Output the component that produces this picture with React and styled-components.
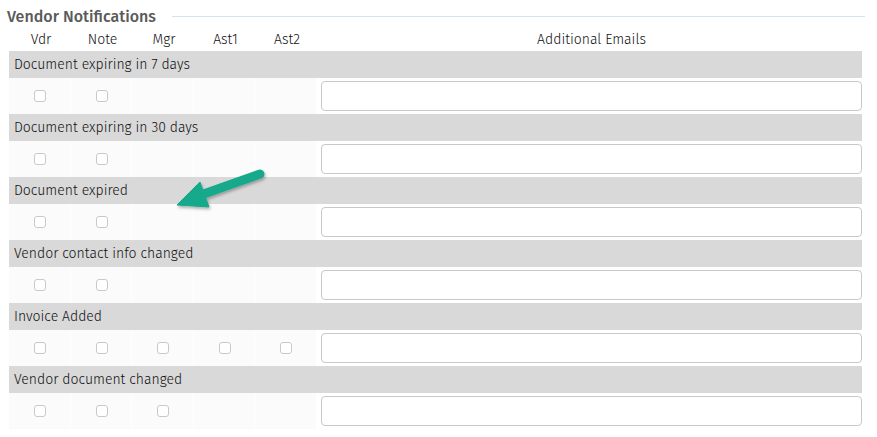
import React from "react";
import styled, { createGlobalStyle } from "styled-components";

const GlobalStyle = createGlobalStyle`
  body {
    margin: 0;
    background: #fff;
    font-family: "Fira Sans", "Open Sans", "Noto Sans", sans-serif;
  }
`;

const columns = ["Vdr", "Note", "Mgr", "Ast1", "Ast2"];

const rows = [
  { label: "Document expiring in 7 days", boxes: 2 },
  { label: "Document expiring in 30 days", boxes: 2 },
  { label: "Document expired", boxes: 2 },
  { label: "Vendor contact info changed", boxes: 2 },
  { label: "Invoice Added", boxes: 5 },
  { label: "Vendor document changed", boxes: 3 },
];

const App = () => {
  return (
    <>
      <GlobalStyle />
      <Page>
        <Legend>
          <LegendText>Vendor Notifications</LegendText>
          <LegendLine />
        </Legend>
        <Table>
          <HeadRow>
            {columns.map((c) => (
              <HeadCell key={c}>{c}</HeadCell>
            ))}
            <EmailHead>Additional Emails</EmailHead>
          </HeadRow>
          {rows.map((r) => (
            <React.Fragment key={r.label}>
              <GroupRow>{r.label}</GroupRow>
              <BodyRow>
                {columns.map((c, i) => (
                  <BoxCell key={c}>{i < r.boxes && <Check type="checkbox" />}</BoxCell>
                ))}
                <EmailCell>
                  <EmailInput type="text" />
                </EmailCell>
              </BodyRow>
            </React.Fragment>
          ))}
        </Table>
        <Arrow width="100" height="50" viewBox="0 0 100 50">
          <defs>
            <filter id="sh" x="-20%" y="-20%" width="140%" height="160%">
              <feDropShadow dx="1" dy="2" stdDeviation="1.5" floodColor="#000" floodOpacity="0.3" />
            </filter>
          </defs>
          <g filter="url(#sh)" fill="#15a98b" stroke="#15a98b">
            <line x1="88" y1="11" x2="26" y2="33" strokeWidth="9" strokeLinecap="round" />
            <polygon points="5,42 28,19 37,44" strokeWidth="1" strokeLinejoin="round" />
          </g>
        </Arrow>
      </Page>
    </>
  );
};

export default App;

const Page = styled.div`
  position: relative;
  width: 877px;
  height: 437px;
  padding: 6px 15px 0 9px;
  box-sizing: border-box;
`;

const Legend = styled.div`
  display: flex;
  align-items: center;
  gap: 16px;
  margin-left: -2px;
  height: 20px;
`;

const LegendText = styled.div`
  font-size: 16px;
  font-weight: 500;
  color: #5a5a5a;
  white-space: nowrap;
`;

const LegendLine = styled.div`
  flex: 1;
  height: 1px;
  background: #d2e3f3;
  margin-right: -3px;
`;

const Table = styled.div`
  display: flex;
  flex-direction: column;
  width: 853px;
`;

const HeadRow = styled.div`
  display: grid;
  grid-template-columns: 0.5px repeat(5, 61.5px) 1fr;
  height: 25px;
  padding-top: 1px;
  box-sizing: border-box;
  align-items: center;
  font-size: 14px;
  font-weight: 300;
  color: #111;
  &::before {
    content: "";
  }
`;

const HeadCell = styled.div`
  text-align: center;
  padding-left: 1.5px;
`;

const EmailHead = styled.div`
  text-align: center;
  padding-left: 4px;
`;

const GroupRow = styled.div`
  height: 27px;
  background: #d9d9d9;
  display: flex;
  align-items: center;
  padding-left: 5px;
  font-size: 14px;
  font-weight: 300;
  color: #111;
`;

const BodyRow = styled.div`
  display: grid;
  grid-template-columns: repeat(5, 61.5px) 1fr;
  height: 36px;
  align-items: stretch;
`;

const BoxCell = styled.div`
  display: flex;
  align-items: center;
  justify-content: center;
  padding-left: 2px;
  background: #fbfbfb;
  border-right: 1px solid #fff;
`;

const Check = styled.input`
  appearance: none;
  width: 12px;
  height: 12px;
  margin: 0;
  border: 1px solid #c9c9c9;
  border-radius: 3px;
  background: #fff;
`;

const EmailCell = styled.div`
  display: flex;
  align-items: center;
  padding-left: 4px;
`;

const EmailInput = styled.input`
  width: 100%;
  height: 30px;
  box-sizing: border-box;
  border: 1px solid #c8c8c8;
  border-radius: 4px;
  background: #fff;
`;

const Arrow = styled.svg`
  position: absolute;
  left: 172px;
  top: 163px;
  overflow: visible;
`;
